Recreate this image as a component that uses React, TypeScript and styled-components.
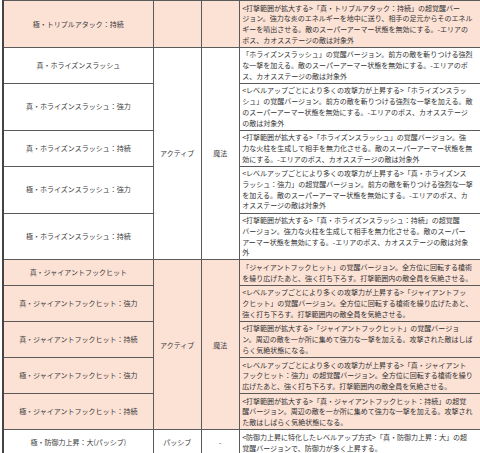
import React from "react";
import styled, { createGlobalStyle } from "styled-components";

type Tone = "pink" | "white";

interface Skill {
  name: string;
  lines: string[];
}

interface Group {
  tone: Tone;
  kind: string;
  attr: string;
  skills: Skill[];
}

const GlobalStyle = createGlobalStyle`
  html, body {
    margin: 0;
    padding: 0;
    background: #ffffff;
    overflow: hidden;
  }
  body {
    font-family: "Noto Sans CJK JP", "Noto Sans", sans-serif;
    color: #333333;
  }
`;

const Page = styled.div`
  width: 480px;
  height: 453px;
  overflow: hidden;
`;

const Table = styled.table`
  border-collapse: collapse;
  table-layout: fixed;
  width: 484px;
  margin-left: 2px;
  border-left: 2px solid #444444;
`;

const Col = styled.col<{ $w: number }>`
  width: ${(p) => p.$w}px;
`;

const Cell = styled.td<{ $tone: Tone }>`
  border: 1px solid #5a5a5a;
  background: ${(p) => (p.$tone === "pink" ? "#fce1d5" : "#ffffff")};
  font-size: 7px;
  line-height: 10.7px;
  padding: 1.5px 2px;
  vertical-align: middle;
  white-space: nowrap;
  overflow: hidden;
`;

const NameCell = styled(Cell)`
  text-align: center;
  color: #3a3a3a;
`;

const TypeCell = styled(Cell)`
  text-align: center;
  color: #3a3a3a;
`;

const DescCell = styled(Cell)`
  text-align: left;
  padding-left: 2.5px;
`;

const groups: Group[] = [
  {
    tone: "pink",
    kind: "",
    attr: "",
    skills: [
      {
        name: "極・トリプルアタック：持続",
        lines: [
          "<打撃範囲が拡大する>「真・トリプルアタック：持続」の超覚醒バー",
          "ジョン。強力な炎のエネルギーを地中に送り、相手の足元からそのエネル",
          "ギーを噴出させる。敵のスーパーアーマー状態を無効にする。-エリアの",
          "ボス、カオスステージの敵は対象外",
        ],
      },
    ],
  },
  {
    tone: "white",
    kind: "アクティブ",
    attr: "魔法",
    skills: [
      {
        name: "真・ホライズンスラッシュ",
        lines: [
          "「ホライズンスラッシュ」の覚醒バージョン。前方の敵を斬りつける強烈",
          "な一撃を加える。敵のスーパーアーマー状態を無効にする。-エリアのボ",
          "ス、カオスステージの敵は対象外",
        ],
      },
      {
        name: "真・ホライズンスラッシュ：強力",
        lines: [
          "<レベルアップごとにより多くの攻撃力が上昇する>「ホライズンスラッ",
          "シュ」の覚醒バージョン。前方の敵を斬りつける強烈な一撃を加える。敵",
          "のスーパーアーマー状態を無効にする。-エリアのボス、カオスステージ",
          "の敵は対象外",
        ],
      },
      {
        name: "真・ホライズンスラッシュ：持続",
        lines: [
          "<打撃範囲が拡大する>「ホライズンスラッシュ」の覚醒バージョン。強",
          "力な火柱を生成して相手を無力化させる。敵のスーパーアーマー状態を無",
          "効にする。-エリアのボス、カオスステージの敵は対象外",
        ],
      },
      {
        name: "極・ホライズンスラッシュ：強力",
        lines: [
          "<レベルアップごとにより多くの攻撃力が上昇する>「真・ホライズンス",
          "ラッシュ：強力」の超覚醒バージョン。前方の敵を斬りつける強烈な一撃",
          "を加える。敵のスーパーアーマー状態を無効にする。-エリアのボス、カ",
          "オスステージの敵は対象外",
        ],
      },
      {
        name: "極・ホライズンスラッシュ：持続",
        lines: [
          "<打撃範囲が拡大する>「真・ホライズンスラッシュ：持続」の超覚醒",
          "バージョン。強力な火柱を生成して相手を無力化させる。敵のスーパー",
          "アーマー状態を無効にする。-エリアのボス、カオスステージの敵は対象",
          "外",
        ],
      },
    ],
  },
  {
    tone: "pink",
    kind: "アクティブ",
    attr: "魔法",
    skills: [
      {
        name: "真・ジャイアントフックヒット",
        lines: [
          "「ジャイアントフックヒット」の覚醒バージョン。全方位に回転する槍術",
          "を繰り広げたあと、強く打ち下ろす。打撃範囲内の敵全員を気絶させる。",
        ],
      },
      {
        name: "真・ジャイアントフックヒット：強力",
        lines: [
          "<レベルアップごとにより多くの攻撃力が上昇する>「ジャイアントフッ",
          "クヒット」の覚醒バージョン。全方位に回転する槍術を繰り広げたあと、",
          "強く打ち下ろす。打撃範囲内の敵全員を気絶させる。",
        ],
      },
      {
        name: "真・ジャイアントフックヒット：持続",
        lines: [
          "<打撃範囲が拡大する>「ジャイアントフックヒット」の覚醒バージョ",
          "ン。周辺の敵を一か所に集めて強力な一撃を加える。攻撃された敵はしば",
          "らく気絶状態になる。",
        ],
      },
      {
        name: "極・ジャイアントフックヒット：強力",
        lines: [
          "<レベルアップごとにより多くの攻撃力が上昇する>「真・ジャイアント",
          "フックヒット：強力」の超覚醒バージョン。全方位に回転する槍術を繰り",
          "広げたあと、強く打ち下ろす。打撃範囲内の敵全員を気絶させる。",
        ],
      },
      {
        name: "極・ジャイアントフックヒット：持続",
        lines: [
          "<打撃範囲が拡大する>「真・ジャイアントフックヒット：持続」の超覚",
          "醒バージョン。周辺の敵を一か所に集めて強力な一撃を加える。攻撃され",
          "た敵はしばらく気絶状態になる。",
        ],
      },
    ],
  },
  {
    tone: "white",
    kind: "パッシブ",
    attr: "-",
    skills: [
      {
        name: "極・防御力上昇：大(パッシブ)",
        lines: [
          "<防御力上昇に特化したレベルアップ方式>「真・防御力上昇：大」の超",
          "覚醒バージョンで、防御力が多く上昇する。",
        ],
      },
    ],
  },
];

function Lines({ lines }: { lines: string[] }) {
  return (
    <>
      {lines.map((line, i) => (
        <React.Fragment key={i}>
          {i > 0 && <br />}
          {line}
        </React.Fragment>
      ))}
    </>
  );
}

export default function App() {
  return (
    <Page>
      <GlobalStyle />
      <Table>
        <colgroup>
          <Col $w={150} />
          <Col $w={48} />
          <Col $w={38} />
          <Col $w={246} />
        </colgroup>
        <tbody>
          {groups.map((group, gi) =>
            group.skills.map((skill, si) => (
              <tr key={`${gi}-${si}`}>
                <NameCell $tone={group.tone}>{skill.name}</NameCell>
                {si === 0 && (
                  <>
                    <TypeCell $tone={group.tone} rowSpan={group.skills.length}>
                      {group.kind}
                    </TypeCell>
                    <TypeCell $tone={group.tone} rowSpan={group.skills.length}>
                      {group.attr}
                    </TypeCell>
                  </>
                )}
                <DescCell $tone={group.tone}>
                  <Lines lines={skill.lines} />
                </DescCell>
              </tr>
            ))
          )}
        </tbody>
      </Table>
    </Page>
  );
}
